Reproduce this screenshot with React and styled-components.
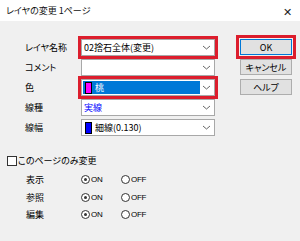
import React from 'react';
import styled, { createGlobalStyle, css } from 'styled-components';

const GlobalStyle = createGlobalStyle`
  html, body {
    margin: 0;
    padding: 0;
    background: #f0f0f0;
  }
  body {
    font-family: "Noto Sans CJK JP", "Noto Sans", sans-serif;
    font-size: 9px;
    font-feature-settings: "palt";
    color: #000;
  }
`;

const Window = styled.div`
  width: 300px;
  height: 241px;
  background: #f0f0f0;
  overflow: hidden;
`;

const TitleBar = styled.div`
  height: 21px;
  background: #fff;
  display: flex;
  align-items: center;
  justify-content: space-between;
  padding: 0 6px;
`;

const Title = styled.span`
  font-size: 9px;
  color: #111;
`;

const Close = styled.span`
  font-size: 11px;
  color: #222;
  margin-right: 2px;
`;

const Body = styled.div`
  padding: 18px 0 0 7px;
`;

const Top = styled.div`
  display: flex;
  gap: 25px;
`;

const Form = styled.div`
  margin-left: 18px;
  display: grid;
  grid-template-columns: 56px 134px;
  grid-auto-rows: 17px;
  row-gap: 3px;
  align-items: center;
`;

const Label = styled.span`
  line-height: 17px;
`;

const highlight = css`
  outline: 3px solid #dc1e2d;
`;

const Field = styled.div`
  box-sizing: border-box;
  height: 17px;
  background: #fff;
  border: 1px solid #a8a8a8;
  display: flex;
  align-items: center;
  padding: 0 1px;
  ${(p) => p.$hl && highlight}
`;

const Value = styled.div`
  flex: 1;
  height: 13px;
  display: flex;
  align-items: center;
  gap: 3px;
  padding-left: 1px;
  background: ${(p) => (p.$selected ? '#0078d7' : 'transparent')};
  color: ${(p) => (p.$selected ? '#fff' : p.$color || '#000')};
`;

const Swatch = styled.span`
  width: 5px;
  height: 10px;
  border: 1px solid #000;
  background: ${(p) => p.$color};
  margin-left: 1px;
`;

const Chevron = styled.svg`
  width: 13px;
  height: 13px;
  flex: none;
`;

const Buttons = styled.div`
  display: flex;
  flex-direction: column;
  gap: 4px;
  padding-top: 0px;
`;

const Button = styled.div`
  box-sizing: border-box;
  width: 52px;
  height: 16px;
  background: #e1e1e1;
  border: 1px solid ${(p) => (p.$default ? '#0078d7' : '#adadad')};
  display: flex;
  align-items: center;
  justify-content: center;
  ${(p) => p.$hl && css`outline: 3px solid #dc1e2d; outline-offset: 1px;`}
`;

const CheckRow = styled.label`
  display: flex;
  align-items: center;
  gap: 1px;
  margin-top: 19px;
  height: 11px;
`;

const Box = styled.span`
  box-sizing: border-box;
  width: 10px;
  height: 10px;
  border: 1px solid #333;
  background: #fff;
`;

const RadioGrid = styled.div`
  margin: 5px 0 0 19px;
  display: grid;
  grid-template-columns: 55px 40px 40px;
  grid-auto-rows: 17.5px;
  align-items: center;
`;

const RadioItem = styled.span`
  display: flex;
  align-items: center;
  gap: 1px;
  font-family: "Liberation Sans", Arial, sans-serif;
  font-size: 8px;
  letter-spacing: -0.3px;
`;

const Circle = styled.span`
  box-sizing: border-box;
  width: 9px;
  height: 9px;
  border-radius: 50%;
  border: 1px solid #333;
  background: #fff;
  display: flex;
  align-items: center;
  justify-content: center;
  &::after {
    content: '';
    width: 3px;
    height: 3px;
    border-radius: 50%;
    background: ${(p) => (p.$on ? '#333' : 'transparent')};
  }
`;

const Arrow = () => (
  <Chevron viewBox="0 0 13 13">
    <path d="M3 5 L6.5 8 L10 5" fill="none" stroke="#555" strokeWidth="0.9" />
  </Chevron>
);

const rows = [
  { label: '表示' },
  { label: '参照' },
  { label: '編集' },
];

export default function App() {
  return (
    <Window>
      <GlobalStyle />
      <TitleBar>
        <Title>レイヤの変更 1ページ</Title>
        <Close>✕</Close>
      </TitleBar>
      <Body>
        <Top>
          <Form>
            <Label>レイヤ名称</Label>
            <Field $hl>
              <Value>02捨石全体(変更)</Value>
              <Arrow />
            </Field>
            <Label>コメント</Label>
            <Field>
              <Value />
              <Arrow />
            </Field>
            <Label>色</Label>
            <Field $hl>
              <Value $selected>
                <Swatch $color="#ff00ff" />
                桃
              </Value>
              <Arrow />
            </Field>
            <Label>線種</Label>
            <Field>
              <Value $color="#0000ff">実線</Value>
              <Arrow />
            </Field>
            <Label>線幅</Label>
            <Field>
              <Value>
                <Swatch $color="#0000ff" />
                細線(0.130)
              </Value>
              <Arrow />
            </Field>
          </Form>
          <Buttons>
            <Button $default $hl>OK</Button>
            <Button>キャンセル</Button>
            <Button>ヘルプ</Button>
          </Buttons>
        </Top>
        <CheckRow>
          <Box />
          このページのみ変更
        </CheckRow>
        <RadioGrid>
          {rows.map((r) => (
            <React.Fragment key={r.label}>
              <Label>{r.label}</Label>
              <RadioItem>
                <Circle $on />
                ON
              </RadioItem>
              <RadioItem>
                <Circle />
                OFF
              </RadioItem>
            </React.Fragment>
          ))}
        </RadioGrid>
      </Body>
    </Window>
  );
}
